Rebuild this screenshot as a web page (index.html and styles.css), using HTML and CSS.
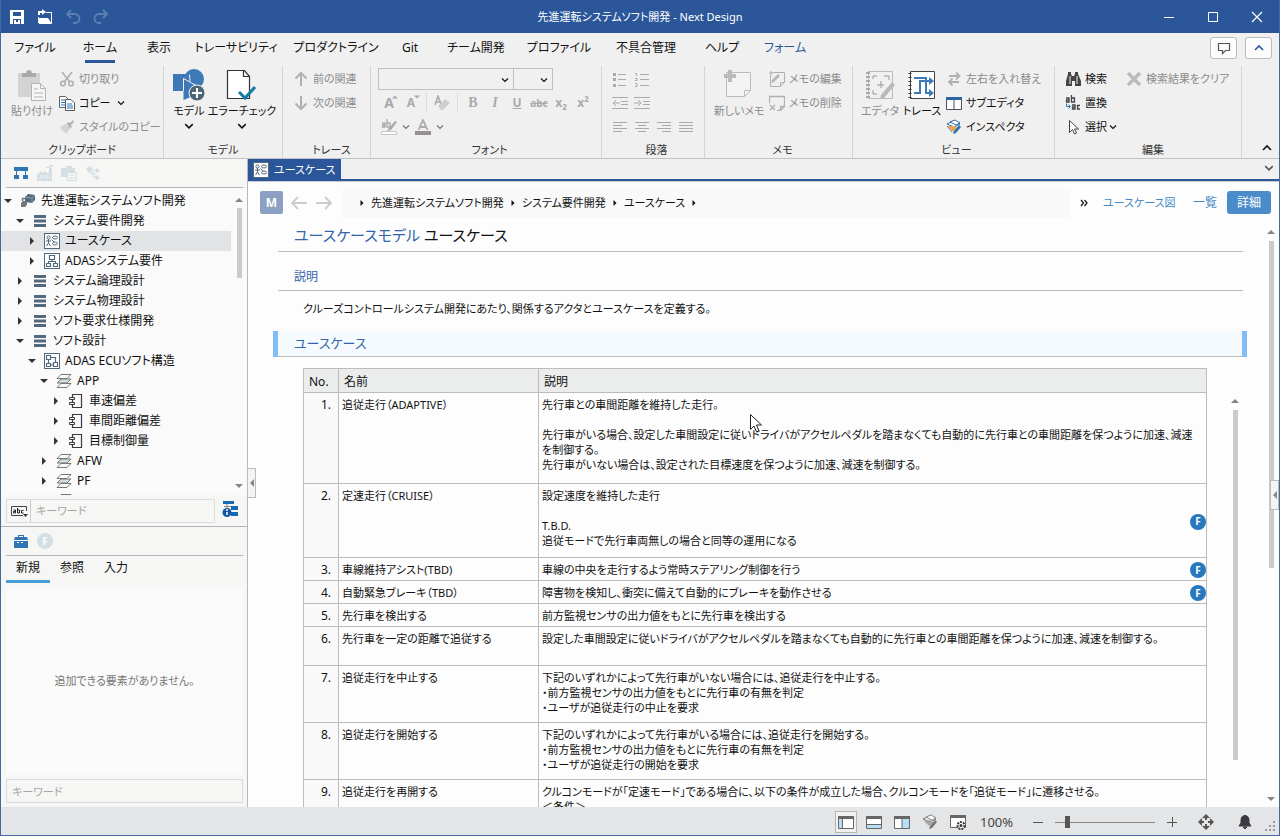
FILE: index.html
```html
<!DOCTYPE html>
<html lang="ja">
<head>
  <meta charset="UTF-8">
  <meta name="viewport" content="width=device-width, initial-scale=1.0">
  <title>先進運転システムソフト開発 - Next Design</title>
  <link rel="stylesheet" href="styles.css">
</head>
<body>
  <!-- Icon sprite -->
  <svg class="sprite" aria-hidden="true">
    <symbol id="chev" viewBox="0 0 8 8"><path d="M1 2.500l3 3 3-3" fill="none" stroke="currentColor" stroke-width="1.200"/></symbol>
    <symbol id="chev-up" viewBox="0 0 12 12"><path d="M2 8l4-4 4 4" fill="none" stroke="currentColor" stroke-width="1.600"/></symbol>
    <symbol id="package" viewBox="0 0 14 14"><path d="M1 1h12v3H1zM1 5.500h12v3H1zM1 10h12v3H1z" fill="#53687c"/></symbol>
    <symbol id="usecase" viewBox="0 0 16 16"><rect x=".5" y=".5" width="15" height="15" fill="#fff" stroke="#53687c"/><g fill="none" stroke="#53687c"><circle cx="4.500" cy="4.500" r="1.600"/><path d="M4.500 6v4M2 8h5M4.500 10l-2 3M4.500 10l2 3"/><ellipse cx="11" cy="4.500" rx="2.500" ry="1.500"/><ellipse cx="11" cy="10.500" rx="2.500" ry="1.500"/><path d="M7.500 6.500l2.500 2.500"/></g></symbol>
    <symbol id="require" viewBox="0 0 16 16"><rect x=".5" y=".5" width="15" height="15" fill="#fff" stroke="#53687c"/><path d="M5.500 2.500h5v4h-5zM2.500 10.500h4v3h-4zM9.500 10.500h4v3h-4zM8 6.500v2M4.500 10.500v-2h7v2" fill="none" stroke="#53687c" stroke-width="1.200"/></symbol>
    <symbol id="struct" viewBox="0 0 16 16"><rect x=".5" y=".5" width="15" height="15" fill="#fff" stroke="#53687c"/><path d="M2.500 2.500h4v4h-4zM2.500 10.500h4v3h-4zM9.500 9.500h4v4h-4zM4.500 6.500v4M6.500 4.500h5v5M6.500 12h3" fill="none" stroke="#53687c" stroke-width="1.200"/></symbol>
    <symbol id="layers" viewBox="0 0 16 16"><g stroke="#777" fill="#fafafa"><path d="M1 14.500l4-4h10l-4 4z"/><path d="M1 10l4-4h10l-4 4z" fill="#cfdfe4"/><path d="M1 5.500l4-4h10l-4 4z"/></g></symbol>
    <symbol id="component" viewBox="0 0 16 16"><path d="M4.500 4V1.500h9v13h-9V12M4.500 7v2" fill="none" stroke="#3a3a42" stroke-width="1.200"/><path d="M1.500 4.500h5v2h-5zM1.500 9.500h5v2h-5z" fill="#fff" stroke="#3a3a42"/></symbol>
    <symbol id="project" viewBox="0 0 16 16"><path d="M5 4l3-3 7 1v5l-3 3-7-1z" fill="#53687c"/><path d="M5 4l7 1 3-3M12 5v5" stroke="#8fa1b0" fill="none"/><path d="M1 10l2-2h4v4l-2 2H1z" fill="#777"/><path d="M2.500 8V5.500H5" fill="none" stroke="#777" stroke-width="1.500"/></symbol>
    <symbol id="inspector" viewBox="0 0 16 16"><path d="M1 5l6-3 7 3-6 3z" fill="#fff" stroke="#2f6fa8"/><path d="M2 7l5 6 4-4-3-2z" fill="#efa550"/><path d="M4 3l5-2 5 3-4 2z" fill="#fff" stroke="#2f6fa8"/><path d="M8 12l5-6 2 2-5 6-3 1z" fill="#2f75b5"/><path d="M1 7l5 6" stroke="#777"/></symbol>
    <symbol id="inspector-gray" viewBox="0 0 16 16"><path d="M1 5l6-3 7 3-6 3z" fill="#ececec" stroke="#777"/><path d="M2 7l5 5 4-3-3-3z" fill="#a5a5a5"/><path d="M4 3l5-2 5 3-4 2z" fill="#fff" stroke="#888"/><path d="M8 12l5-6 2 2-5 6-3 1z" fill="#777"/></symbol>
    <symbol id="tri-r" viewBox="0 0 8 8"><path d="M2 0l4 4-4 4z" fill="currentColor"/></symbol>
    <symbol id="tri-d" viewBox="0 0 8 8"><path d="M0 2h8L4 6z" fill="currentColor"/></symbol>
    <symbol id="tri-u" viewBox="0 0 8 8"><path d="M0 6h8L4 2z" fill="currentColor"/></symbol>
    <symbol id="tri-l" viewBox="0 0 8 8"><path d="M6 0L2 4l4 4z" fill="currentColor"/></symbol>
  </svg>

  <div class="window">
    <header class="titlebar">
      <div class="quick">
        <button class="quick-btn" aria-label="保存"><svg class="i16" viewBox="0 0 16 16"><path d="M1 1h14v14H1z" fill="#fff"/><path d="M4 3h8v4H4zM4 10h8v5H4z" fill="#2b579a"/><path d="M5 11h2v2h2v-2h2v4H5z" fill="#fff"/></svg></button>
        <button class="quick-btn" aria-label="開く"><svg class="i16" viewBox="0 0 16 16"><path d="M9 3.500h5.500v11M1.500 8v6" fill="none" stroke="#fff"/><path d="M2 9h9l4 6H2zM1 2h4V0l4 3-4 3V4H3v2H1z" fill="#fff"/></svg></button>
        <button class="quick-btn dim" aria-label="元に戻す"><svg class="i16" viewBox="0 0 16 16"><path d="M2 5h8a4 4 0 010 9H8M6 1L2 5l4 4" fill="none" stroke="currentColor" stroke-width="1.800"/></svg></button>
        <button class="quick-btn dim" aria-label="やり直し"><svg class="i16" viewBox="0 0 16 16"><path d="M14 5H6a4 4 0 000 9h2M10 1l4 4-4 4" fill="none" stroke="currentColor" stroke-width="1.800"/></svg></button>
      </div>
      <h1 class="title">先進運転システムソフト開発 - Next Design</h1>
      <div class="winbtns">
        <button aria-label="最小化"><svg class="i12" viewBox="0 0 12 12"><path d="M1 6.500h10" stroke="#fff"/></svg></button>
        <button aria-label="最大化"><svg class="i12" viewBox="0 0 12 12"><path d="M1.500 1.500h9v9h-9z" fill="none" stroke="#fff"/></svg></button>
        <button aria-label="閉じる"><svg class="i12" viewBox="0 0 12 12"><path d="M1 1l10 10M11 1L1 11" stroke="#fff" stroke-width="1.200"/></svg></button>
      </div>
    </header>

    <nav class="menubar">
      <div class="menus">
        <button>ファイル</button>
        <button class="active">ホーム</button>
        <button>表示</button>
        <button>トレーサビリティ</button>
        <button>プロダクトライン</button>
        <button>Git</button>
        <button>チーム開発</button>
        <button>プロファイル</button>
        <button>不具合管理</button>
        <button>ヘルプ</button>
        <button class="context">フォーム</button>
      </div>
      <div class="menu-side">
        <button class="boxed" aria-label="コメント"><svg class="i14" viewBox="0 0 14 14"><path d="M1.500 2.500h11v7H8.500l-3 3v-3h-4z" fill="none" stroke="#555" stroke-width="1.200"/></svg></button>
        <button class="boxed blue" aria-label="閉じる"><svg class="i12"><use href="#chev-up"/></svg></button>
      </div>
    </nav>

    <div class="ribbon">
      <section class="group g-clip">
        <div class="group-body">
          <button class="big dim"><svg class="i32" viewBox="0 0 32 32"><path d="M2 4h22v24H2z" fill="#d2d3d5"/><path d="M6 4h4c0-4 6-4 6 0h4v4H6z" fill="#aaa"/><path d="M15.500 14.500h9l5 5v12h-14z" fill="#f6f6f6" stroke="#b3b3b3"/><path d="M24.500 14.500v5h5M18 20h4M18 24h9M18 28h9" fill="none" stroke="#b3b3b3"/></svg>貼り付け</button>
          <div class="stack">
            <button class="small dim"><svg class="i16" viewBox="0 0 16 16"><g fill="none" stroke="currentColor" stroke-width="1.600"><circle cx="4" cy="12.500" r="2.300"/><circle cx="12" cy="12.500" r="2.300"/><path d="M3 1l7.500 9.500M13 1L5.500 10.500"/></g></svg>切り取り</button>
            <button class="small"><svg class="i16" viewBox="0 0 16 16"><path d="M.5 1.500h6l3 3v8h-9z" fill="#fff" stroke="#666"/><path d="M2 5h4M2 7.500h4M2 10h4" stroke="#2f75b5"/><path d="M6.500 4.500h5.500l3.500 3.500v7.500h-9z" fill="#fff" stroke="#555"/><path d="M8 9h5M8 11h6M8 13h6" stroke="#2f75b5"/></svg>コピー<svg class="i8"><use href="#chev"/></svg></button>
            <button class="small dim"><svg class="i16" viewBox="0 0 16 16"><path d="M1 8l7-4 4 5-5 6c-1-2-4-3-6-7z" fill="#d2d5d6"/><path d="M8 4l2-1 1 1 3-3 1 2-3 3 1 2-2 1z" fill="currentColor"/></svg>スタイルのコピー</button>
          </div>
        </div>
        <h2>クリップボード</h2>
      </section>

      <section class="group g-model">
        <div class="group-body">
          <button class="big"><svg class="i32" viewBox="0 0 32 32"><circle cx="21" cy="10" r="10" fill="#3e79b7"/><path d="M0 5h17v17H0z" fill="#3e79b7"/><path d="M10.500 9.500L27 19v5l-16.500 7z" fill="#3e79b7"/><path d="M16.500 5.500l.5 7M10.500 22V9.500L24 17" fill="none" stroke="#f0f0f0"/><circle cx="24" cy="24" r="8" fill="#4d6678" stroke="#f0f0f0"/><path d="M24 19v10M19 24h10" stroke="#fff" stroke-width="2"/></svg>モデル<svg class="i10"><use href="#chev"/></svg></button>
          <button class="big wide"><svg class="i32" viewBox="0 0 32 32"><path d="M1.500 1.500h17l5 6v22h-22z" fill="#fff" stroke="#333" stroke-width="1.200"/><path d="M17.500 1.500v6h6" fill="none" stroke="#333" stroke-width="1.200"/><path d="M13 23l6 6L29 18" fill="none" stroke="#177ba3" stroke-width="3"/></svg>エラーチェック<svg class="i10"><use href="#chev"/></svg></button>
        </div>
        <h2>モデル</h2>
      </section>

      <section class="group g-trace">
        <div class="group-body">
          <div class="stack">
            <button class="small dim"><svg class="i16" viewBox="0 0 16 16"><path d="M8 15V2M2.500 7.500L8 2l5.500 5.500" fill="none" stroke="currentColor" stroke-width="2"/></svg>前の関連</button>
            <button class="small dim"><svg class="i16" viewBox="0 0 16 16"><path d="M8 1v13M2.500 8.500L8 14l5.500-5.500" fill="none" stroke="currentColor" stroke-width="2"/></svg>次の関連</button>
          </div>
        </div>
        <h2>トレース</h2>
      </section>

      <section class="group g-font">
        <div class="group-body rows">
          <div class="row">
            <span class="combo combo-name"><select aria-label="フォント名"><option></option></select><svg class="i8"><use href="#chev"/></svg></span>
            <span class="combo combo-size"><select aria-label="フォントサイズ"><option></option></select><svg class="i8"><use href="#chev"/></svg></span>
          </div>
          <div class="row tools">
            <button aria-label="拡大"><span class="glyph-a">A</span><svg class="i6 up"><use href="#tri-u"/></svg></button>
            <button aria-label="縮小"><span class="glyph-a sm">A</span><svg class="i6 up"><use href="#tri-d"/></svg></button>
            <i class="vsep"></i>
            <button aria-label="書式のクリア"><svg class="i16" viewBox="0 0 16 16"><path d="M1 10L4 1l3 8M2 7h4" fill="none" stroke="currentColor" stroke-width="1.500"/><path d="M4 11l7-7 5 4-7 7H7z" fill="#cfcfd0"/></svg></button>
            <i class="vsep"></i>
            <button class="serif"><b>B</b></button>
            <button class="serif"><em>I</em></button>
            <button><u>U</u></button>
            <button class="strike"><s>abc</s></button>
            <button>x<sub>2</sub></button>
            <button>x<sup>2</sup></button>
          </div>
          <div class="row tools">
            <button aria-label="蛍光ペン"><svg class="i16" viewBox="0 0 16 16"><path d="M1 4h3v4H1.500V6H4M6 0v8h3V4H6" fill="none" stroke="currentColor" stroke-width="1.300"/><path d="M8 9l6-7 2 1-6 8-4 1z" fill="currentColor"/><path d="M.5 12.500h15v3H.5z" fill="#fff" stroke="#c4c4c4"/></svg></button>
            <button class="tiny" aria-label="色を選択"><svg class="i8"><use href="#chev"/></svg></button>
            <button aria-label="文字の色"><svg class="i16" viewBox="0 0 16 16"><path d="M3.500 11L8 1l4.500 10M5 8h6" fill="none" stroke="currentColor" stroke-width="1.800"/><path d="M0 12h16v4H0z" fill="#988f92"/></svg></button>
            <button class="tiny" aria-label="文字色を選択"><svg class="i8"><use href="#chev"/></svg></button>
          </div>
        </div>
        <h2>フォント</h2>
      </section>

      <section class="group g-para">
        <div class="group-body rows">
          <div class="row tools">
            <button aria-label="箇条書き"><svg class="i16" viewBox="0 0 16 16"><path d="M6 3.500h8M6 8.500h8M6 14.500h8" stroke="currentColor"/><path d="M1 2h3v3H1zM1 7h3v3H1zM1 13h3v3H1z" fill="currentColor"/></svg></button>
            <button aria-label="段落番号"><svg class="i16" viewBox="0 0 16 16"><path d="M6 3.500h9M6 8.500h9M6 14.500h9M1 2.500h1.500V5M1 7.500h2v2H1M1 12.500h2v3H1" fill="none" stroke="currentColor"/></svg></button>
          </div>
          <div class="row tools">
            <button aria-label="インデントを減らす"><svg class="i16" viewBox="0 0 16 16"><path d="M0 2.500h16M9 6.500h7M9 9.500h7M0 13.500h16M1 8h7M4 5L1 8l3 3" fill="none" stroke="currentColor"/></svg></button>
            <button aria-label="インデントを増やす"><svg class="i16" viewBox="0 0 16 16"><path d="M0 2.500h16M9 6.500h7M9 9.500h7M0 13.500h16M0 8h7M4 5l3 3-3 3" fill="none" stroke="currentColor"/></svg></button>
          </div>
          <div class="row tools">
            <button aria-label="左揃え"><svg class="i16" viewBox="0 0 16 16"><path d="M1 3.500h14M1 6.500h9M1 9.500h14M1 12.500h9" stroke="currentColor"/></svg></button>
            <button aria-label="中央揃え"><svg class="i16" viewBox="0 0 16 16"><path d="M1 3.500h14M4 6.500h8M1 9.500h14M4 12.500h8" stroke="currentColor"/></svg></button>
            <button aria-label="右揃え"><svg class="i16" viewBox="0 0 16 16"><path d="M1 3.500h14M6 6.500h9M1 9.500h14M6 12.500h9" stroke="currentColor"/></svg></button>
            <button aria-label="両端揃え"><svg class="i16" viewBox="0 0 16 16"><path d="M1 3.500h14M1 6.500h14M1 9.500h14M1 12.500h14" stroke="currentColor"/></svg></button>
          </div>
        </div>
        <h2>段落</h2>
      </section>

      <section class="group g-memo">
        <div class="group-body">
          <button class="big dim"><svg class="i32" viewBox="0 0 32 32"><path d="M3.500 3.500h24v18l-6 6h-18z" fill="#f4f4f4" stroke="#bbb"/><path d="M27.500 21.500h-6v6" fill="none" stroke="#bbb"/><path d="M5 1h4v4h4v4H9v4H5V9H1V5h4z" fill="#bbb"/></svg>新しいメモ</button>
          <div class="stack">
            <button class="small dim"><svg class="i16" viewBox="0 0 16 16"><path d="M4 1.500h11.500v10l-4 4h-10V4" fill="none" stroke="currentColor"/><path d="M15.500 11.500h-4v4" fill="none" stroke="currentColor"/><path d="M9 3l2 2-6 6-3 1 1-3z" fill="#b5b5b5"/><path d="M0 2h4M2 0v4" stroke="currentColor"/></svg>メモの編集</button>
            <button class="small dim"><svg class="i16" viewBox="0 0 16 16"><path d="M.5 8V1.500h15v10l-4 4H8M15.500 11.500h-4v4M1 10l5 5M6 10l-5 5" fill="none" stroke="currentColor" stroke-width="1.300"/></svg>メモの削除</button>
          </div>
        </div>
        <h2>メモ</h2>
      </section>

      <section class="group g-view">
        <div class="group-body">
          <button class="big narrow dim"><svg class="i32" viewBox="0 0 32 32"><path d="M4.500 2.500h24v27h-24z" fill="none" stroke="#bbb"/><path d="M4 3v26" stroke="#aaa" stroke-width="4" stroke-dasharray="2 2"/><path d="M9 10V7h4M20 7h5v4M9 21v4h4M17 12v7M13 16h7" fill="none" stroke="#999"/><path d="M17 26L28 13l3 3-11 13-4 1z" fill="#b9b9b9"/></svg>エディタ</button>
          <button class="big narrow"><svg class="i32" viewBox="0 0 32 32"><path d="M4.500 2.500h24v27h-24z" fill="#fff" stroke="#444"/><path d="M4 4v25" stroke="#333" stroke-width="3" stroke-dasharray="1 3"/><path d="M8 9h12v15h4M8 24h6V12h10" fill="none" stroke="#3e79b7" stroke-width="2"/><path d="M23 8l5 4-5 4zM23 20l5 4-5 4z" fill="#3e79b7"/></svg>トレース</button>
          <div class="stack">
            <button class="small dim"><svg class="i16" viewBox="0 0 16 16"><path d="M3 5h9M10 1.500L13.500 5 10 8.500M13 11H4M6.500 7.500L3 11l3.500 3.500" fill="none" stroke="currentColor" stroke-width="1.800"/></svg>左右を入れ替え</button>
            <button class="small"><svg class="i16" viewBox="0 0 16 16"><path d="M.5 2.500h15v12H.5zM8 4v10" fill="#fff" stroke="#49515a"/><path d="M0 2h16v3H0z" fill="#2f63a5"/></svg>サブエディタ</button>
            <button class="small"><svg class="i16"><use href="#inspector"/></svg>インスペクタ</button>
          </div>
        </div>
        <h2>ビュー</h2>
      </section>

      <section class="group g-edit">
        <div class="group-body">
          <div class="stack">
            <button class="small"><svg class="i16" viewBox="0 0 16 16"><path d="M3 3V1h3v2l1 2h2l1-2V1h3v2l3 7v5h-6v-5H7v5H1v-5z" fill="#444"/><path d="M5 5v8M12 5v8" stroke="#eee"/></svg>検索</button>
            <button class="small"><svg class="i16" viewBox="0 0 16 16"><path d="M1 3h3v4H1.500V5H4M6.500 0v7h3V3h-3M7 10h3v4H7.500v-2H10M15 10.500h-2.500v3.500H15" fill="none" stroke="#444" stroke-width="1.300"/><path d="M1.500 8.500v3H5M3.500 9.500L5.500 11.500l-2 2" fill="none" stroke="#2f75b5"/></svg>置換</button>
            <button class="small"><svg class="i16" viewBox="0 0 16 16"><path d="M4.500 1.500v12l3-3 2 4.500 2-1-2-4h4z" fill="#fff" stroke="#444"/></svg>選択<svg class="i8 near"><use href="#chev"/></svg></button>
          </div>
          <div class="stack clear">
            <button class="small dim"><svg class="i16" viewBox="0 0 16 16"><path d="M2 2l12 12M14 2L2 14" stroke="#bbb" stroke-width="3.500"/></svg>検索結果をクリア</button>
          </div>
        </div>
        <h2>編集</h2>
      </section>
      <button class="collapse" aria-label="リボンを折りたたむ"><svg class="i12"><use href="#chev-up"/></svg></button>
    </div>

    <div class="main">
      <aside class="sidebar">
        <div class="side-tools">
          <button aria-label="モデル"><svg class="i16" viewBox="0 0 16 16"><path d="M1 2h14v4H1zM1 10h5v4H1zM10 10h5v4h-5z" fill="#2f75b5"/><path d="M3.500 6v4M12.500 6v4" stroke="#2f75b5"/></svg></button>
          <button class="faded" aria-label="プロダクト"><svg class="i16" viewBox="0 0 16 16"><path d="M0 16V9l5-3v2l4-2v2h3V3h3v13zM9 2h3V0h4v2h-3v1H9z" fill="currentColor"/><path d="M3 11h10M3 13h10" stroke="#f6f7f5" stroke-dasharray="2 1"/></svg></button>
          <button class="faded" aria-label="ファイル"><svg class="i16" viewBox="0 0 16 16"><path d="M0 3h5V1h6v2h3v4H6v5H0z" fill="currentColor"/><path d="M6.500 7.500h9v8h-9zM8 10h6M8 13h6" fill="none" stroke="currentColor"/></svg></button>
          <button class="faded" aria-label="関連"><svg class="i16" viewBox="0 0 16 16"><path d="M1 4l4-3 3 3-4 4zM9 5l3-2 3 3-3 2zM9 12l3-2 3 3-3 2z" fill="currentColor"/><path d="M6 6v3h5M8 5v7h3" fill="none" stroke="currentColor"/></svg></button>
        </div>
        <div class="tree-wrap">
          <ul class="tree">
            <li class="lv0"><svg class="i8"><use href="#tri-d"/></svg><svg class="i16"><use href="#project"/></svg>先進運転システムソフト開発</li>
            <li class="lv1"><svg class="i8"><use href="#tri-d"/></svg><svg class="i14"><use href="#package"/></svg>システム要件開発</li>
            <li class="lv2 selected"><svg class="i8"><use href="#tri-r"/></svg><svg class="i16"><use href="#usecase"/></svg>ユースケース</li>
            <li class="lv2"><svg class="i8"><use href="#tri-r"/></svg><svg class="i16"><use href="#require"/></svg>ADASシステム要件</li>
            <li class="lv1"><svg class="i8"><use href="#tri-r"/></svg><svg class="i14"><use href="#package"/></svg>システム論理設計</li>
            <li class="lv1"><svg class="i8"><use href="#tri-r"/></svg><svg class="i14"><use href="#package"/></svg>システム物理設計</li>
            <li class="lv1"><svg class="i8"><use href="#tri-r"/></svg><svg class="i14"><use href="#package"/></svg>ソフト要求仕様開発</li>
            <li class="lv1"><svg class="i8"><use href="#tri-d"/></svg><svg class="i14"><use href="#package"/></svg>ソフト設計</li>
            <li class="lv2"><svg class="i8"><use href="#tri-d"/></svg><svg class="i16"><use href="#struct"/></svg>ADAS ECUソフト構造</li>
            <li class="lv3"><svg class="i8"><use href="#tri-d"/></svg><svg class="i16"><use href="#layers"/></svg>APP</li>
            <li class="lv4"><svg class="i8"><use href="#tri-r"/></svg><svg class="i16"><use href="#component"/></svg>車速偏差</li>
            <li class="lv4"><svg class="i8"><use href="#tri-r"/></svg><svg class="i16"><use href="#component"/></svg>車間距離偏差</li>
            <li class="lv4"><svg class="i8"><use href="#tri-r"/></svg><svg class="i16"><use href="#component"/></svg>目標制御量</li>
            <li class="lv3"><svg class="i8"><use href="#tri-r"/></svg><svg class="i16"><use href="#layers"/></svg>AFW</li>
            <li class="lv3"><svg class="i8"><use href="#tri-r"/></svg><svg class="i16"><use href="#layers"/></svg>PF</li>
            <li class="lv3"><svg class="i8"></svg><svg class="i16"><use href="#layers"/></svg></li>
          </ul>
          <div class="scroll tree-scroll"><svg class="i8"><use href="#tri-u"/></svg><span class="thumb"></span><svg class="i8 end"><use href="#tri-d"/></svg></div>
        </div>
        <div class="side-search">
          <div class="search-box">
            <button aria-label="検索方法"><svg class="i18" viewBox="0 0 18 18"><path d="M16.500 9V4.500h-15v9H13" fill="none" stroke="#444"/><path d="M3.500 8h2v3h-2V9.500h2M7.500 6v5h2V8h-2M13.500 8.500h-2V11h2" fill="none" stroke="#222"/><path d="M13 12h5l-2.500 3z" fill="#333"/></svg></button>
            <input type="text" placeholder="キーワード" aria-label="モデル検索キーワード">
          </div>
          <button aria-label="詳細情報"><svg class="i16" viewBox="0 0 16 16"><path d="M1 0h11v3H1zM9 5h7v4H9zM9 11h7v4H9z" fill="#1768b3"/><path d="M5 3v4M2 5.500h7" stroke="#888"/><circle cx="5" cy="11.500" r="4.500" fill="#1257a8"/><path d="M5 8v2M5 11v3" stroke="#fff" stroke-width="1.500"/></svg></button>
        </div>
        <div class="side-tools second">
          <button aria-label="ツールボックス"><svg class="i16" viewBox="0 0 16 16"><path d="M1 7l1-3h3V2h6v2h3l1 3zM1 8h14v7H1z" fill="#2f75b5"/><path d="M6 4V3h4v1z" fill="#fff"/><path d="M4 9.500h8" stroke="#fff" stroke-dasharray="2 2"/></svg></button>
          <button aria-label="フィーチャ"><span class="badge pale">F</span></button>
        </div>
        <div class="side-tabs">
          <button class="active">新規</button>
          <button>参照</button>
          <button>入力</button>
        </div>
        <p class="empty">追加できる要素がありません。</p>
        <input class="filter" type="text" placeholder="キーワード" aria-label="要素の絞り込み">
        <button class="handle left" aria-label="サイドバーを閉じる"><svg class="i8"><use href="#tri-l"/></svg></button>
      </aside>

      <main class="content">
        <div class="doc-tabs">
          <button class="doc-tab"><svg class="i16"><use href="#usecase"/></svg>ユースケース</button>
          <button class="more" aria-label="タブ一覧"><svg class="i10"><use href="#chev"/></svg></button>
        </div>
        <div class="pathbar">
          <button class="m-btn">M</button>
          <button class="nav-arrow" aria-label="戻る"><svg class="i18" viewBox="0 0 18 18"><path d="M17 9H2M8 3L2 9l6 6" fill="none" stroke="currentColor" stroke-width="1.800"/></svg></button>
          <button class="nav-arrow" aria-label="進む"><svg class="i18" viewBox="0 0 18 18"><path d="M1 9h15M10 3l6 6-6 6" fill="none" stroke="currentColor" stroke-width="1.800"/></svg></button>
          <nav class="crumbs">
            <svg class="i6"><use href="#tri-r"/></svg><a href="#">先進運転システムソフト開発</a>
            <svg class="i6"><use href="#tri-r"/></svg><a href="#">システム要件開発</a>
            <svg class="i6"><use href="#tri-r"/></svg><a href="#">ユースケース</a>
            <svg class="i6"><use href="#tri-r"/></svg>
          </nav>
          <button class="expand" aria-label="その他"><svg class="i8" viewBox="0 0 8 8"><path d="M1 1l2.500 3L1 7M4.500 1L7 4 4.500 7" fill="none" stroke="#222" stroke-width="1.300"/></svg></button>
          <button class="view-btn first">ユースケース図</button>
          <button class="view-btn">一覧</button>
          <button class="view-btn on">詳細</button>
        </div>
        <div class="doc-area">
          <article class="doc">
            <h2 class="doc-title"><span>ユースケースモデル</span> ユースケース</h2>
            <h3 class="field">説明</h3>
            <p class="desc">クルーズコントロールシステム開発にあたり、関係するアクタとユースケースを定義する。</p>
            <h3 class="section">ユースケース</h3>
            <div class="grid-wrap">
              <div class="grid-body">
                <table class="grid">
                  <thead>
                    <tr><th class="c-no">No.</th><th class="c-name">名前</th><th>説明</th></tr>
                  </thead>
                  <tbody>
                    <tr class="r-five">
                      <td>1.</td><td>追従走行（ADAPTIVE）</td>
                      <td>先行車との車間距離を維持した走行。<br><br>先行車がいる場合、設定した車間設定に従いドライバがアクセルペダルを踏まなくても自動的に先行車との車間距離を保つように加速、減速<br>を制御する。<br>先行車がいない場合は、設定された目標速度を保つように加速、減速を制御する。
                        <svg class="pointer" viewBox="0 0 14 20"><path d="M1.500 1.500v15l3.500-3.500 2.500 6 2.500-1-2.500-6h5z" fill="#fff" stroke="#222"/></svg></td>
                    </tr>
                    <tr class="r-four">
                      <td>2.</td><td>定速走行（CRUISE）</td>
                      <td>設定速度を維持した走行<br><br>T.B.D.<br>追従モードで先行車両無しの場合と同等の運用になる<span class="badge mark">F</span></td>
                    </tr>
                    <tr><td>3.</td><td>車線維持アシスト(TBD)</td><td>車線の中央を走行するよう常時ステアリング制御を行う<span class="badge mark">F</span></td></tr>
                    <tr><td>4.</td><td>自動緊急ブレーキ（TBD）</td><td>障害物を検知し、衝突に備えて自動的にブレーキを動作させる<span class="badge mark">F</span></td></tr>
                    <tr><td>5.</td><td>先行車を検出する</td><td>前方監視センサの出力値をもとに先行車を検出する</td></tr>
                    <tr class="r-two"><td>6.</td><td>先行車を一定の距離で追従する</td><td>設定した車間設定に従いドライバがアクセルペダルを踏まなくても自動的に先行車との車間距離を保つように加速、減速を制御する。</td></tr>
                    <tr class="r-three"><td>7.</td><td>追従走行を中止する</td><td>下記のいずれかによって先行車がいない場合には、追従走行を中止する。<br>・前方監視センサの出力値をもとに先行車の有無を判定<br>・ユーザが追従走行の中止を要求</td></tr>
                    <tr class="r-three"><td>8.</td><td>追従走行を開始する</td><td>下記のいずれかによって先行車がいる場合には、追従走行を開始する。<br>・前方監視センサの出力値をもとに先行車の有無を判定<br>・ユーザが追従走行の開始を要求</td></tr>
                    <tr class="r-three"><td>9.</td><td>追従走行を再開する</td><td>クルコンモードが「定速モード」である場合に、以下の条件が成立した場合、クルコンモードを「追従モード」に遷移させる。<br>＜条件＞</td></tr>
                  </tbody>
                </table>
              </div>
              <div class="scroll grid-scroll"><svg class="i8"><use href="#tri-u"/></svg><span class="thumb"></span></div>
            </div>
          </article>
          <div class="scroll doc-scroll"><svg class="i8"><use href="#tri-u"/></svg><span class="thumb"></span><svg class="i8 end"><use href="#tri-d"/></svg></div>
        </div>
        <button class="handle right" aria-label="パネルを開く"><svg class="i8"><use href="#tri-l"/></svg></button>
      </main>
    </div>

    <footer class="statusbar">
      <button class="on" aria-label="左パネル"><svg class="i16" viewBox="0 0 16 16"><path d="M.5 2.500h15v12H.5z" fill="#fff"/><path d="M1 3h4v12H1z" fill="#b6e0f5"/><path d="M.5 2.500h15v12H.5zM4.500 5v10" fill="none" stroke="#666"/><path d="M0 2h16v3H0z" fill="#666"/></svg></button>
      <button aria-label="下パネル"><svg class="i16" viewBox="0 0 16 16"><path d="M.5 2.500h15v12H.5z" fill="#fff" stroke="#666"/><path d="M1 10h14v4H1z" fill="#b6e0f5"/><path d="M0 2h16v3H0z" fill="#666"/><path d="M1 10.500h14" stroke="#666"/></svg></button>
      <button aria-label="右パネル"><svg class="i16" viewBox="0 0 16 16"><path d="M.5 2.500h15v12H.5z" fill="#fff" stroke="#666"/><path d="M8 4h7v10H8z" fill="#b6e0f5"/><path d="M0 2h16v3H0z" fill="#666"/><path d="M8 4v10" stroke="#666"/></svg></button>
      <button aria-label="インスペクタ"><svg class="i16"><use href="#inspector-gray"/></svg></button>
      <button aria-label="設定"><svg class="i16" viewBox="0 0 16 16"><path d="M.5 1.500h15v12H.5z" fill="#fff" stroke="#666"/><path d="M0 1h16v3H0z" fill="#666"/><circle cx="11" cy="11.500" r="3.500" fill="#fff" stroke="#333" stroke-width="2" stroke-dasharray="2 1"/><circle cx="11" cy="11.500" r="1.500" fill="#333"/></svg></button>
      <span class="zoom-value">100%</span>
      <button class="step" aria-label="縮小"><svg class="i10" viewBox="0 0 10 10"><path d="M0 5.500h10" stroke="#555"/></svg></button>
      <input class="zoom" type="range" min="0" max="100" value="10" aria-label="ズーム">
      <button class="step" aria-label="拡大"><svg class="i10" viewBox="0 0 10 10"><path d="M0 5.500h10M5.500 0v10" stroke="#555"/></svg></button>
      <button class="fit" aria-label="全体表示"><svg class="i16" viewBox="0 0 16 16"><path d="M8 0l4 4H9v2H7V4H4zM8 16l4-4H9v-2H7v2H4zM0 8l4-4v3h2v2H4v3zM16 8l-4-4v3h-2v2h2v3z" fill="#555"/></svg></button>
      <button class="bell" aria-label="通知"><svg class="i16" viewBox="0 0 16 16"><path d="M2 12l2-3V6c0-6 8-6 8 0v3l2 3zM6 13h4l-2 2z" fill="#3a3842" stroke="#3a3842"/></svg></button>
      <svg class="i10 grip" viewBox="0 0 10 10"><path d="M8 0h2v2H8zM4 4h2v2H4zM8 4h2v2H8zM0 8h2v2H0zM4 8h2v2H4zM8 8h2v2H8z" fill="#999"/></svg>
    </footer>
  </div>
</body>
</html>
```
FILE: styles.css
```css
* {
  box-sizing: border-box;
}

body {
  margin: 0;
  font-family: "Noto Sans", "Noto Sans CJK JP", sans-serif;
  font-size: 11px;
  line-height: 16px;
  font-feature-settings: "palt";
  color: #111;
}

button, input, select {
  font: inherit;
  font-feature-settings: inherit;
  color: inherit;
  margin: 0;
  padding: 0;
  border: 0;
  background: none;
}

button {
  white-space: nowrap;
}

h1, h2, h3, p, ul {
  margin: 0;
  padding: 0;
  font-size: 11px;
  font-weight: normal;
}

svg {
  flex: none;
}

.sprite { position: absolute; width: 0; height: 0; }
.i6 { width: 6px; height: 6px; }
.i8 { width: 8px; height: 8px; }
.i10 { width: 10px; height: 10px; }
.i12 { width: 12px; height: 12px; }
.i14 { width: 14px; height: 14px; }
.i16 { width: 16px; height: 16px; }
.i18 { width: 18px; height: 18px; }
.i32 { width: 32px; height: 32px; }

.window {
  display: flex;
  flex-direction: column;
  height: 100vh;
  border: 1px solid #44699f;
  border-top: 0;
  background: #f0f0f0;
}

/* Title bar */
.titlebar {
  display: grid;
  grid-template-columns: 1fr auto 1fr;
  align-items: center;
  height: 33px;
  flex: none;
  padding-top: 1px;
  background: #2b579a;
  color: #fff;
}

.quick {
  display: flex;
  padding-left: 2px;
}

.quick-btn {
  width: 28px;
  height: 24px;
  display: grid;
  place-items: center;
}

.quick-btn.dim { color: #5e7fb2; }

.winbtns {
  display: flex;
  justify-content: flex-end;
}

.winbtns button {
  width: 44px;
  height: 24px;
  display: grid;
  place-items: center;
}

/* Menu */
.menubar {
  display: flex;
  justify-content: space-between;
  height: 30px;
  flex: none;
}

.menus {
  display: grid;
  grid-template-columns: 66px 64px 54px 100px 100px 48px 84px 82px 92px 60px 66px;
  padding-left: 1px;
  font-size: 12px;
}

.menus button {
  position: relative;
  height: 30px;
}

.menus .active::after {
  content: "";
  position: absolute;
  left: 17px;
  right: 17px;
  bottom: 0;
  height: 3px;
  background: #2b579a;
}

.menus .context { color: #2b579a; }

.menu-side {
  display: flex;
  gap: 8px;
  padding: 4px 7px 0 0;
}

.boxed {
  width: 27px;
  height: 22px;
  display: grid;
  place-items: center;
  border: 1px solid #bbb;
  border-radius: 3px;
  background: #fcfcfc;
}

.boxed.blue { color: #2b579a; }

/* Ribbon */
.ribbon {
  display: flex;
  height: 96px;
  flex: none;
  padding-top: 3px;
  border-bottom: 1px solid #c2c2c2;
}

.group {
  display: flex;
  flex-direction: column;
  border-right: 1px solid #d5d5d5;
  flex: none;
}

.group h2 {
  text-align: center;
  color: #333;
}

.group-body {
  display: flex;
  height: 76px;
  padding-top: 1px;
}

.rows {
  flex-direction: column;
}

.row {
  display: flex;
  align-items: center;
  height: 24px;
}

.g-clip { width: 163px; }
.g-model { width: 119px; }
.g-trace { width: 88px; padding-left: 10px; }
.g-font { width: 231px; padding-left: 7px; }
.g-para { width: 103px; padding-left: 7px; }
.g-memo { width: 148px; padding-left: 8px; }
.g-view { width: 202px; padding-left: 6px; }
.g-edit { width: 187px; padding-left: 10px; }

.big {
  display: flex;
  flex-direction: column;
  align-items: center;
  flex: none;
  width: 50px;
  padding-top: 2px;
  line-height: 20px;
}

.g-clip .big { width: 58px; padding-left: 4px; }
.g-memo .big { width: 52px; margin-right: 4px; }
.big.wide { width: 56px; }
.big.narrow { width: 42px; }

.stack {
  display: flex;
  flex-direction: column;
  flex: none;
}

.g-view .stack { margin-left: 3px; }

.small {
  display: flex;
  align-items: center;
  gap: 4px;
  height: 24px;
  text-align: left;
}

.small .i8 { margin-left: 2px; }
.small .near { margin-left: -2px; }
.stack.clear { margin-left: 9px; }
.ribbon .dim { color: #8b8b8b; }
.ribbon .dim svg { color: #b0b0b0; }

.combo {
  position: relative;
  display: flex;
  height: 22px;
  border: 1px solid #c0c0c0;
}

.combo select {
  width: 100%;
  appearance: none;
}

.combo .i8 {
  position: absolute;
  right: 4px;
  top: 7px;
  pointer-events: none;
}

.combo-name { width: 136px; }
.combo-size { width: 40px; margin-left: -1px; }

.tools {
  color: #aaa;
  font-size: 12px;
}

.tools button {
  position: relative;
  width: 22px;
  height: 24px;
  display: flex;
  align-items: center;
  justify-content: center;
  font-weight: bold;
}

.tools .tiny { width: 12px; color: #777; }
.tools .serif { font-family: "Liberation Serif", serif; font-size: 14px; }
.tools .strike { font-size: 10px; }
.glyph-a { font-size: 14px; }
.glyph-a.sm { font-size: 12px; }
.tools .up { position: absolute; right: 2px; top: 3px; }
.tools sub, .tools sup { font-size: 8px; line-height: 8px; }
.tools sub { align-self: flex-end; padding-bottom: 4px; }
.tools sup { align-self: flex-start; padding-top: 4px; }

.vsep {
  width: 1px;
  height: 20px;
  margin: 0 4px;
  background: #dcdcdc;
}

.collapse {
  align-self: flex-end;
  height: 16px;
  margin: 0 6px 0 auto;
}

/* Main */
.main {
  display: flex;
  flex: 1;
  min-height: 0;
}

.sidebar {
  position: relative;
  display: flex;
  flex-direction: column;
  width: 247px;
  flex: none;
  border-right: 1px solid #b8b8b8;
  background: #f6f7f5;
}

.side-tools {
  display: flex;
  align-items: center;
  gap: 8px;
  height: 29px;
  flex: none;
  margin: 0 4px 0 5px;
  padding-left: 7px;
  border-bottom: 1px solid #b5b5b5;
}

.side-tools button {
  display: flex;
}

.faded { color: #d3dfe5; }

.tree-wrap {
  display: flex;
  height: 307px;
  flex: none;
  padding-top: 3px;
  background: #fafafa;
  overflow: hidden;
}

.tree {
  flex: 1;
  list-style: none;
  font-size: 12px;
}

.tree li {
  display: flex;
  align-items: center;
  height: 20px;
  white-space: nowrap;
}

.tree .i8 { margin-right: 8px; color: #333; }
.tree .i16 { margin-right: 5px; }
.tree .i14 { margin: 0 6px 0 1px; }
.lv0 { padding-left: 3px; }
.lv1 { padding-left: 15px; }
.lv2 { padding-left: 27px; }
.lv3 { padding-left: 39px; }
.lv4 { padding-left: 51px; }
.selected { background: #e2e3e5; }

.scroll {
  display: flex;
  flex-direction: column;
  align-items: center;
  width: 16px;
  flex: none;
  color: #858585;
}

.thumb {
  width: 5px;
  margin-top: 5px;
  background: #cbcbcb;
}

.scroll .end { margin-top: auto; }
.tree-scroll { padding: 5px 0 5px; }
.tree-scroll .thumb { height: 70px; margin-top: 4px; }

.side-search {
  display: flex;
  align-items: center;
  gap: 7px;
  height: 32px;
  flex: none;
  padding-left: 5px;
  border-bottom: 1px solid #b5b5b5;
}

.search-box {
  display: flex;
  width: 209px;
  height: 24px;
  border: 1px solid #dcdcdc;
}

.search-box button {
  display: grid;
  place-items: center;
  width: 24px;
  border-right: 1px solid #ccc;
}

.search-box input {
  flex: 1;
  min-width: 0;
  padding-left: 5px;
}

input::placeholder {
  color: #a6a6a6;
  opacity: 1;
}

.side-tabs {
  display: flex;
  height: 27px;
  flex: none;
  padding-left: 5px;
  font-size: 12px;
}

.side-tabs button {
  width: 44px;
  padding-bottom: 1px;
  border-bottom: 3px solid transparent;
}

.side-tabs .active { border-color: #4a9fd8; }

.badge {
  display: grid;
  place-items: center;
  width: 16px;
  height: 16px;
  border-radius: 50%;
  background: #2878c0;
  color: #fff;
  font-size: 10px;
  font-weight: bold;
}

.badge.pale { background: #d3dfe5; }

.empty {
  flex: 1;
  display: grid;
  place-items: center;
  margin: 4px 4px 4px 5px;
  background: #fafafa;
  color: #777;
}

.filter {
  height: 24px;
  flex: none;
  margin: 0 4px 4px 5px;
  padding-left: 5px;
  border: 1px solid #dcdcdc;
}

.handle {
  position: absolute;
  width: 9px;
  height: 30px;
  display: grid;
  place-items: center;
  border: 1px solid #bbb;
  background: #f3f5f5;
  color: #888;
  overflow: hidden;
}

.handle.left { right: -9px; top: 309px; z-index: 1; }
.handle.right { right: 0; top: 321px; }

/* Document */
.content {
  position: relative;
  display: flex;
  flex-direction: column;
  flex: 1;
  min-width: 0;
  background: #fdfdfd;
}

.doc-tabs {
  display: flex;
  justify-content: space-between;
  height: 22px;
  flex: none;
  border-bottom: 2px solid #2b579a;
  background: #f0f0f0;
}

.doc-tab {
  display: flex;
  align-items: center;
  gap: 5px;
  padding: 2px 6px 0 5px;
  background: #2b579a;
  color: #fff;
}

.more {
  padding-right: 5px;
  color: #555;
}

.pathbar {
  display: flex;
  align-items: center;
  height: 42px;
  flex: none;
  padding: 0 8px 0 12px;
  border-top: 1px solid #ccc;
}

.m-btn {
  width: 23px;
  height: 23px;
  margin-right: 7px;
  border-radius: 2px;
  background: #8ba0c2;
  color: #fff;
  font-size: 12px;
  font-weight: bold;
}

.nav-arrow {
  display: flex;
  width: 25px;
  color: #ccc;
}

.crumbs {
  display: flex;
  align-items: center;
  gap: 6px;
  flex: 1;
  height: 30px;
  margin-left: 2px;
  padding-left: 17px;
  border-radius: 4px;
  background: #f9f9f9;
}

a {
  color: inherit;
  text-decoration: none;
}

.expand { margin: 0 15px 0 9px; }

.view-btn {
  height: 23px;
  width: 44px;
  border-radius: 3px;
  color: #4189c7;
  font-size: 12px;
}

.view-btn.first { width: 70px; margin-right: 10px; font-size: 11px; }
.view-btn.on { background: #4a8bc9; color: #fff; }

.doc-area {
  display: flex;
  flex: 1;
  min-height: 0;
  overflow: hidden;
}

.doc {
  flex: 1;
  min-width: 0;
  padding: 0 20px 0 30px;
}

.doc-title {
  height: 29px;
  padding-left: 16px;
  border-bottom: 1px solid #bcbcbc;
  font-size: 15px;
  line-height: 24px;
}

.doc-title span, .field, .section { color: #3465a8; }

.field {
  height: 39px;
  padding: 15px 0 0 16px;
  border-bottom: 1px solid #bcbcbc;
  font-size: 12px;
  line-height: 20px;
}

.desc {
  height: 40px;
  padding: 8px 0 0 25px;
  line-height: 20px;
}

.section {
  height: 26px;
  margin: 0 -4px 0 -5px;
  padding-left: 16px;
  border: 0 solid #84bdf6;
  border-width: 0 5px;
  background: #f4fafd;
  box-shadow: inset 0 -1px #bcbcbc;
  font-size: 13px;
  line-height: 24px;
}

.grid-wrap {
  display: flex;
  padding: 11px 0 0 25px;
}

.grid-body {
  flex: 1;
  min-width: 0;
}

.grid {
  width: 100%;
  table-layout: fixed;
  border-collapse: collapse;
  line-height: 15px;
}

.grid th, .grid td {
  position: relative;
  height: 23px;
  padding: 4px 3px 3px;
  border: 1px solid #bcbcbc;
  font-weight: normal;
  text-align: left;
  vertical-align: top;
  white-space: nowrap;
}

.grid th {
  height: 24px;
  padding: 5px 5px 3px;
  background: #ebecec;
  font-size: 12px;
}

.grid .c-no { width: 35px; }
.grid .c-name { width: 200px; }

.grid td:first-child {
  padding-right: 7px;
  background: #f9f9f9;
  font-size: 12px;
  text-align: right;
}

.grid .r-five td { height: 91px; }
.grid .r-four td { height: 74px; }
.grid .r-three td { height: 57px; }
.grid .r-two td { height: 39px; }

.mark {
  position: absolute;
  right: 0;
  top: calc(50% - 7px);
}

.pointer {
  position: absolute;
  left: 210px;
  top: 20px;
  width: 14px;
  height: 20px;
}

.grid-scroll {
  margin-left: 20px;
  padding-top: 29px;
}

.grid-scroll .thumb { height: 350px; }

.doc-scroll { padding: 5px 0 4px; }
.doc-scroll .thumb { height: 327px; }

/* Status bar */
.statusbar {
  display: flex;
  align-items: center;
  justify-content: flex-end;
  height: 28px;
  flex: none;
  padding: 2px 4px 0 0;
  background: #e4e5e7;
}

.statusbar button {
  width: 28px;
  height: 22px;
  display: grid;
  place-items: center;
}

.statusbar .on {
  width: 22px;
  margin-right: 3px;
  border: 1px solid #b5b5b5;
  background: #f0f0f0;
}

.zoom-value {
  width: 52px;
  padding-left: 8px;
  color: #444;
  font-size: 13px;
}

.zoom {
  width: 100px;
  height: 12px;
  margin: 0 3px;
  appearance: none;
  background: linear-gradient(#888, #888) center / 100% 1px no-repeat;
}

.zoom::-webkit-slider-thumb {
  appearance: none;
  width: 5px;
  height: 12px;
  background: #555;
}

.statusbar .fit { margin-left: 6px; }
.statusbar .bell { margin: 0 6px 0 11px; }
.grip { align-self: flex-end; margin-bottom: 4px; }
```
